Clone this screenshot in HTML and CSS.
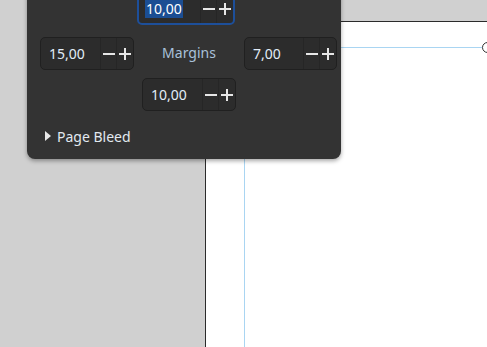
FILE: index.html
```html
<!DOCTYPE html>
<html lang="en">
<head>
<meta charset="UTF-8" />
<title>Margins</title>
<link rel="stylesheet" href="styles.css">
</head>
<body>

<div class="canvas">
  <div class="page">
    <div class="guide guide-h"></div>
    <div class="guide guide-v"></div>
    <div class="handle"></div>
  </div>
</div>

<div class="popover">
  <div class="grid">
    <div class="spin spin-top focused">
      <span class="value"><span class="sel">10,00</span></span>
      <span class="btn btn-minus"><svg width="12" height="12" viewBox="0 0 12 12"><line x1="0" y1="6" x2="12" y2="6" /></svg></span>
      <span class="btn btn-plus"><svg width="12" height="12" viewBox="0 0 12 12"><line x1="0" y1="6" x2="12" y2="6" /><line x1="6" y1="0" x2="6" y2="12" /></svg></span>
    </div>

    <div class="spin spin-left">
      <span class="value">15,00</span>
      <span class="btn btn-minus"><svg width="12" height="12" viewBox="0 0 12 12"><line x1="0" y1="6" x2="12" y2="6" /></svg></span>
      <span class="btn btn-plus"><svg width="12" height="12" viewBox="0 0 12 12"><line x1="0" y1="6" x2="12" y2="6" /><line x1="6" y1="0" x2="6" y2="12" /></svg></span>
    </div>
    <div class="label">Margins</div>
    <div class="spin spin-right">
      <span class="value">7,00</span>
      <span class="btn btn-minus"><svg width="12" height="12" viewBox="0 0 12 12"><line x1="0" y1="6" x2="12" y2="6" /></svg></span>
      <span class="btn btn-plus"><svg width="12" height="12" viewBox="0 0 12 12"><line x1="0" y1="6" x2="12" y2="6" /><line x1="6" y1="0" x2="6" y2="12" /></svg></span>
    </div>

    <div class="spin spin-bottom">
      <span class="value">10,00</span>
      <span class="btn btn-minus"><svg width="12" height="12" viewBox="0 0 12 12"><line x1="0" y1="6" x2="12" y2="6" /></svg></span>
      <span class="btn btn-plus"><svg width="12" height="12" viewBox="0 0 12 12"><line x1="0" y1="6" x2="12" y2="6" /><line x1="6" y1="0" x2="6" y2="12" /></svg></span>
    </div>

    <div class="bleed">
      <span class="caret"></span>
      <span>Page Bleed</span>
    </div>
  </div>
</div>

</body>
</html>
```

FILE: styles.css
```css
* {
  box-sizing: border-box;
}
html, body {
  height: 100%;
}
body {
  margin: 0;
  background: #d0d0d0;
  font-family: 'Noto Sans', sans-serif;
  overflow: hidden;
}

/* canvas with the page sheet */
.canvas {
  padding: 21px 0 0 205px;
  height: 100%;
}
.page {
  position: relative;
  height: 100%;
  background: #fff;
  border-left: 1px solid #2b2b2b;
  border-top: 1px solid #2b2b2b;
}
.guide {
  position: absolute;
  background: #a9d5f2;
}
.guide-h {
  top: 25px;
  left: 0;
  width: 276px;
  height: 1px;
}
.guide-v {
  top: 0;
  bottom: 0;
  left: 38px;
  width: 1px;
}
.handle {
  position: absolute;
  top: 20px;
  left: 276px;
  width: 11px;
  height: 11px;
  border: 1.5px solid #333;
  border-radius: 50%;
  background: #fff;
}

/* margins popover */
.popover {
  position: absolute;
  left: 27px;
  top: -20px;
  width: 314px;
  padding: 12px 4px 13px 13px;
  background: #333333;
  border-radius: 0 0 8px 8px;
  box-shadow: 0 2px 4px rgb(0 0 0 / 0.35);
}
.grid {
  display: grid;
  grid-template-columns: 94px 110px 93px;
  row-gap: 8px;
  align-items: center;
}
.spin {
  display: flex;
  height: 33px;
  background: #2c2c2c;
  border: 1px solid #202020;
  border-radius: 5px;
  color: #e2edf8;
  font-size: 14px;
}
.spin .value {
  flex: 1;
  display: flex;
  align-items: center;
  padding-left: 8px;
}
.spin .btn {
  display: flex;
  align-items: center;
  justify-content: center;
  border-left: 1px solid #262626;
}
.btn-minus {
  width: 16px;
}
.btn-plus {
  width: 17px;
}
.btn svg line {
  stroke: #e6e6e6;
  stroke-width: 2;
}
.spin-top {
  grid-column: 2;
  grid-row: 1;
  width: 98px;
  margin-left: 3px;
  margin-bottom: 4px;
  border: 2px solid #1d4f9a;
}
.spin-top .value {
  padding-left: 6px;
}
.sel {
  background: #1b4e93;
  color: #fff;
  padding: 0 1px;
  line-height: 18px;
}
.spin-left {
  grid-column: 1;
  grid-row: 2;
}
.label {
  grid-column: 2;
  grid-row: 2;
  text-align: center;
  color: #a9c1da;
  font-size: 14px;
  margin-top: -3px;
}
.spin-right {
  grid-column: 3;
  grid-row: 2;
}
.spin-bottom {
  grid-column: 2;
  grid-row: 3;
  width: 94px;
  margin-left: 8px;
}
.bleed {
  grid-column: 1 / -1;
  grid-row: 4;
  display: flex;
  align-items: center;
  gap: 6px;
  margin-top: 7px;
  padding-left: 5px;
  height: 20px;
  color: #e2e9f0;
  font-size: 14px;
}
.caret {
  width: 0;
  height: 0;
  border-left: 6px solid #e8e8e8;
  border-top: 5px solid transparent;
  border-bottom: 5px solid transparent;
}
```
